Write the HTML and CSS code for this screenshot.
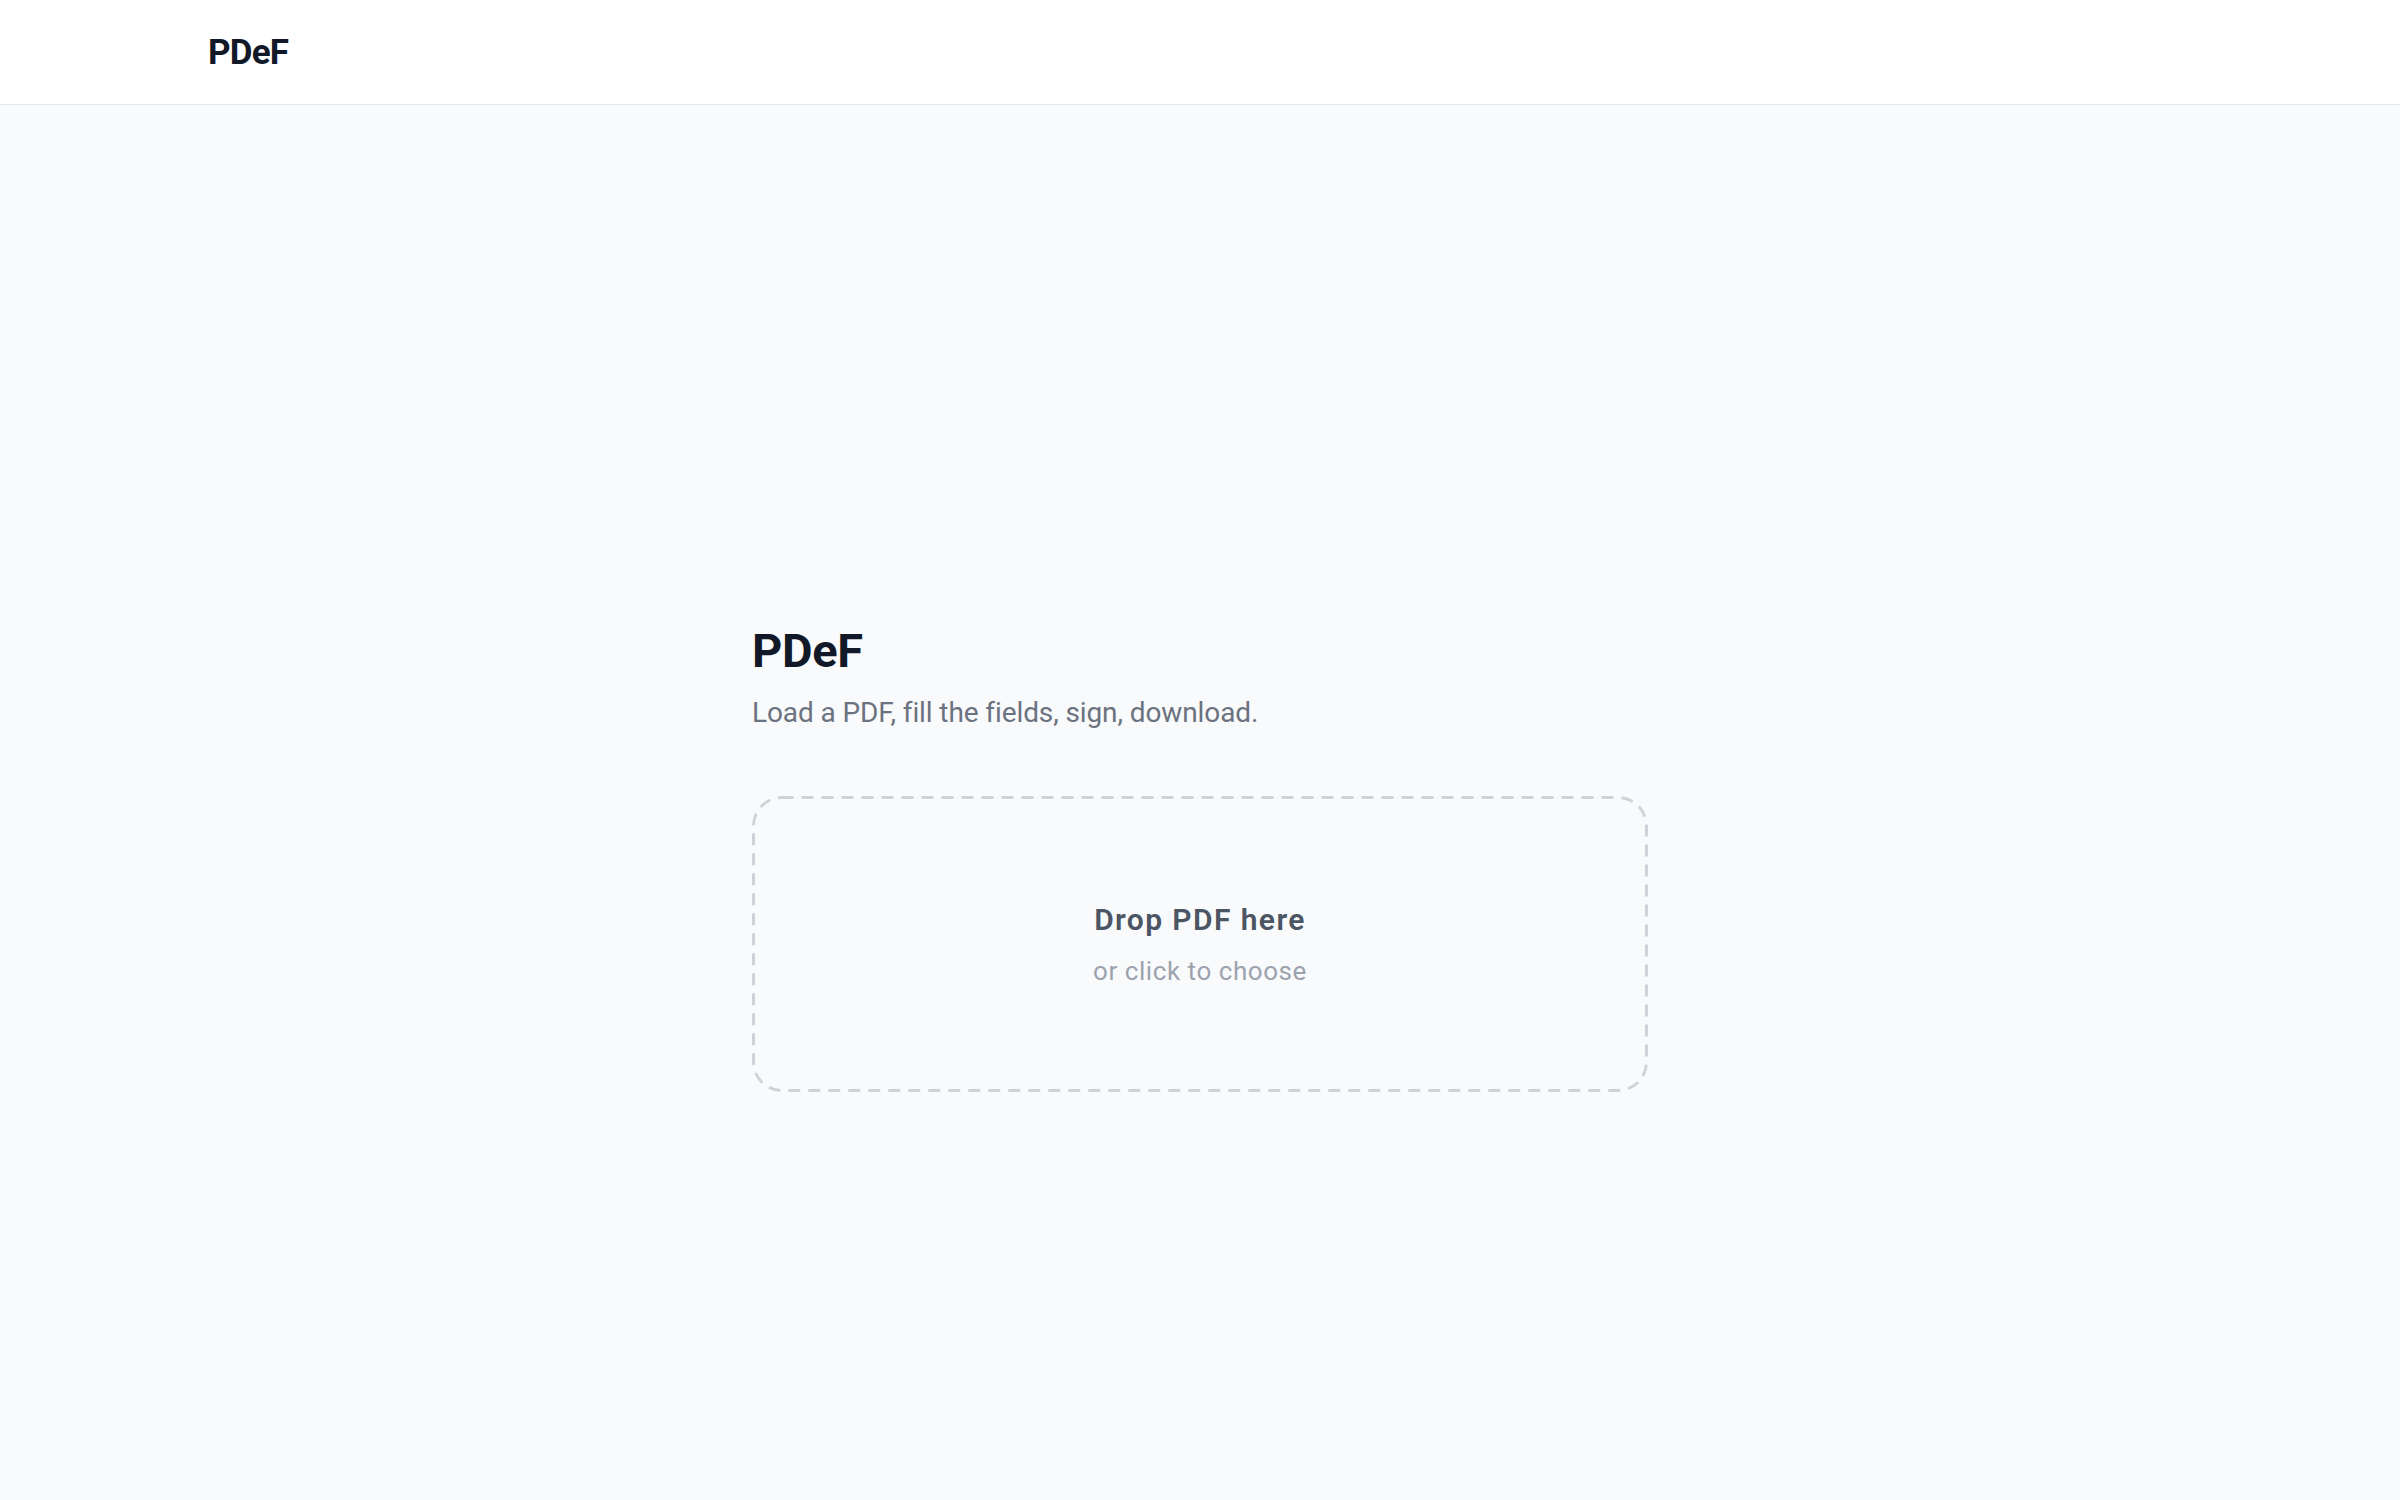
FILE: index.html
```html
<!DOCTYPE html>
<html lang="en">
<head>
    <meta charset="UTF-8">
    <meta name="viewport" content="width=device-width, initial-scale=1.0">
    <title>PDeF</title>
    <link rel="stylesheet" href="styles.css">
</head>
<body>

    <header class="topbar">
        <div class="brand">PDeF</div>
    </header>

    <main class="landing">
        <div class="intro">
            <h1>PDeF</h1>
            <p class="tagline">Load a PDF, fill the fields, sign, download.</p>

            <label class="dropzone" for="file">
                <span class="drop-title">Drop PDF here</span>
                <span class="drop-hint">or click to choose</span>
                <input type="file" id="file" accept="application/pdf">
            </label>
        </div>
    </main>

</body>
</html>
```

FILE: styles.css
```css
* {
    box-sizing: border-box;
    margin: 0;
    padding: 0;
}
html, body {
    height: 100%;
}
body {
    font-family: Roboto, "Liberation Sans", Arial, sans-serif;
    background-color: #f9fafb;
    color: #111827;
    display: flex;
    flex-direction: column;
}
.topbar {
    height: 105px;
    background-color: white;
    border-bottom: 1px solid #e5e7eb;
    display: flex;
    align-items: center;
    padding: 0 208px;
}
.brand {
    font-size: 35px;
    font-weight: 700;
    letter-spacing: -0.8px;
    color: #111827;
}
.landing {
    flex: 1;
    display: flex;
    justify-content: center;
    align-items: center;
    padding-top: 110px;
}
.intro {
    width: 896px;
}
h1 {
    font-size: 47px;
    font-weight: 700;
    letter-spacing: -0.3px;
    line-height: 1.2;
}
.tagline {
    font-size: 28px;
    letter-spacing: -0.1px;
    color: #6b7280;
    margin-top: 17px;
}
/* dashed outline drawn as svg so the dash length can be set */
.dropzone {
    margin-top: 67px;
    height: 296px;
    border-radius: 30px;
    background-image: url("data:image/svg+xml,%3Csvg xmlns='http://www.w3.org/2000/svg' width='100%25' height='100%25'%3E%3Crect x='1.5' y='1.5' width='calc(100%25 - 3px)' height='calc(100%25 - 3px)' rx='28' fill='none' stroke='%23cfd3d9' stroke-width='3.2' stroke-dasharray='12 8'/%3E%3C/svg%3E");
    display: flex;
    flex-direction: column;
    justify-content: center;
    align-items: center;
    gap: 19px;
    cursor: pointer;
}
.dropzone input {
    display: none;
}
.drop-title {
    font-size: 30px;
    font-weight: 600;
    letter-spacing: 1.4px;
    color: #4b5563;
}
.drop-hint {
    font-size: 26px;
    letter-spacing: 0.55px;
    color: #9ca3af;
}
```
